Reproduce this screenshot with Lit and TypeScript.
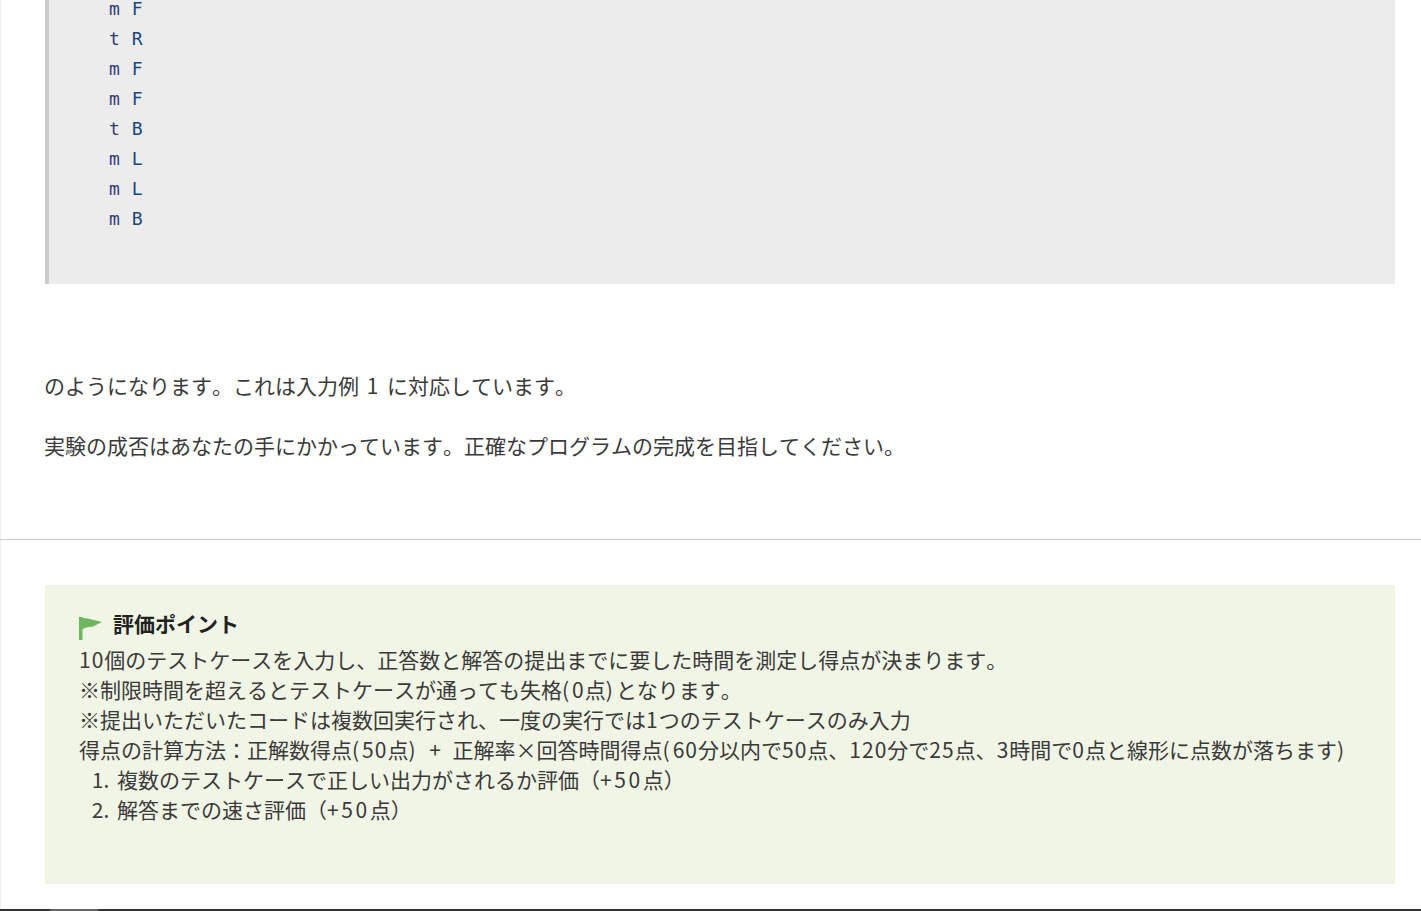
import { LitElement, html, css } from "lit";
import { customElement } from "lit/decorators.js";

const rows: [string, string][] = [
  ["m", "F"], ["t", "R"], ["m", "F"], ["m", "F"], ["t", "B"], ["m", "L"], ["m", "L"], ["m", "B"],
];

@customElement("app-root")
export class AppRoot extends LitElement {
  static styles = css`
    :host {
      display: block;
      height: 911px;
      overflow: hidden;
      background: #fff;
      font-family: "Noto Sans CJK JP", "Open Sans", sans-serif;
      color: #3a3a3a;
      font-size: 21px;
      word-spacing: 3px;
      font-kerning: none;
      text-spacing-trim: space-all;
      position: relative;
    }
    .page {
      border-left: 1px solid #eeeeee;
      height: 909px;
      box-sizing: border-box;
      display: flex;
      flex-direction: column;
    }
    .top { padding: 0 26px 0 44px; }
    .code {
      height: 284px;
      box-sizing: border-box;
      background: #ececec;
      border-left: 4px solid #ccc;
      padding: 0 0 0 60px;
      font-family: "DejaVu Sans Mono", monospace;
      font-size: 18px;
      line-height: 30px;
      color: #17477e;
      overflow: hidden;
      word-spacing: 0;
    }
    .rows { margin-top: -6px; }
    .row { height: 30px; white-space: pre; }
    .cmd { color: #33397a; margin-right: 12px; }
    .para { line-height: 30px; margin: 0 0 0 -1px; }
    .p1 { margin-top: 86px; }
    .p2 { margin-top: 30px; }
    hr {
      border: 0;
      border-top: 1px solid #ccc;
      margin: 79px 0 0 -1px;
    }
    .note {
      margin: 45px 26px 0 44px;
      background: #f1f5e6;
      height: 299px;
      box-sizing: border-box;
      padding: 23px 34px;
      line-height: 30px;
    }
    .title {
      display: flex;
      align-items: center;
      font-weight: 700;
      color: #222;
      height: 30px;
      margin-bottom: 6px;
    }
    .title svg { margin-right: 10px; margin-top: 10px; }
    .l { letter-spacing: 1px; }
    .p { letter-spacing: 3px; }
    .plus { letter-spacing: 1px; word-spacing: 5px; }
    ol { margin: 0; padding: 0 0 0 38px; }
    li .l { letter-spacing: 2.6px; }
    .bar {
      position: absolute;
      left: 0;
      right: 0;
      bottom: 0;
      height: 2px;
      background: #333;
    }
    .thumb {
      position: absolute;
      left: 50px;
      bottom: 0;
      height: 2px;
      width: 48px;
      background: #666;
    }
  `;

  render() {
    return html`
      <div class="page">
        <div class="top">
          <div class="code">
            <div class="rows">
              ${rows.map(([a, b]) => html`<div class="row"><span class="cmd">${a}</span>${b}</div>`)}
            </div>
          </div>
          <p class="para p1">のようになります。これは入力例 <span class="l">1</span> に対応しています。</p>
          <p class="para p2">実験の成否はあなたの手にかかっています。正確なプログラムの完成を目指してください。</p>
        </div>
        <hr />
        <div class="note">
          <div class="title">
            <svg width="24" height="24" viewBox="0 0 24 24">
              <path d="M0 1h3.500v23H0z M3 1c2 1 4 1.500 6 1.500l14 3.500-10 5c-3-.5-6 .5-10 2.500z" fill="#6fb75f" />
            </svg>
            評価ポイント
          </div>
          <div><span class="l">10</span>個のテストケースを入力し、正答数と解答の提出までに要した時間を測定し得点が決まります。</div>
          <div>※制限時間を超えるとテストケースが通っても失格<span class="p">(</span><span class="l">0</span>点<span class="p">)</span>となります。</div>
          <div>※提出いただいたコードは複数回実行され、一度の実行では<span class="l">1</span>つのテストケースのみ入力</div>
          <div>得点の計算方法：正解数得点<span class="p">(</span><span class="l">50</span>点<span class="p">)</span><span class="plus"> + </span>正解率×回答時間得点<span class="p">(</span><span class="l">60</span>分以内で<span class="l">50</span>点、<span class="l">120</span>分で<span class="l">25</span>点、<span class="l">3</span>時間で<span class="l">0</span>点と線形に点数が落ちます<span class="p">)</span></div>
          <ol>
            <li>複数のテストケースで正しい出力がされるか評価（<span class="l">+50</span>点）</li>
            <li>解答までの速さ評価（<span class="l">+50</span>点）</li>
          </ol>
        </div>
      </div>
      <div class="bar"></div>
      <div class="thumb"></div>
    `;
  }
}
